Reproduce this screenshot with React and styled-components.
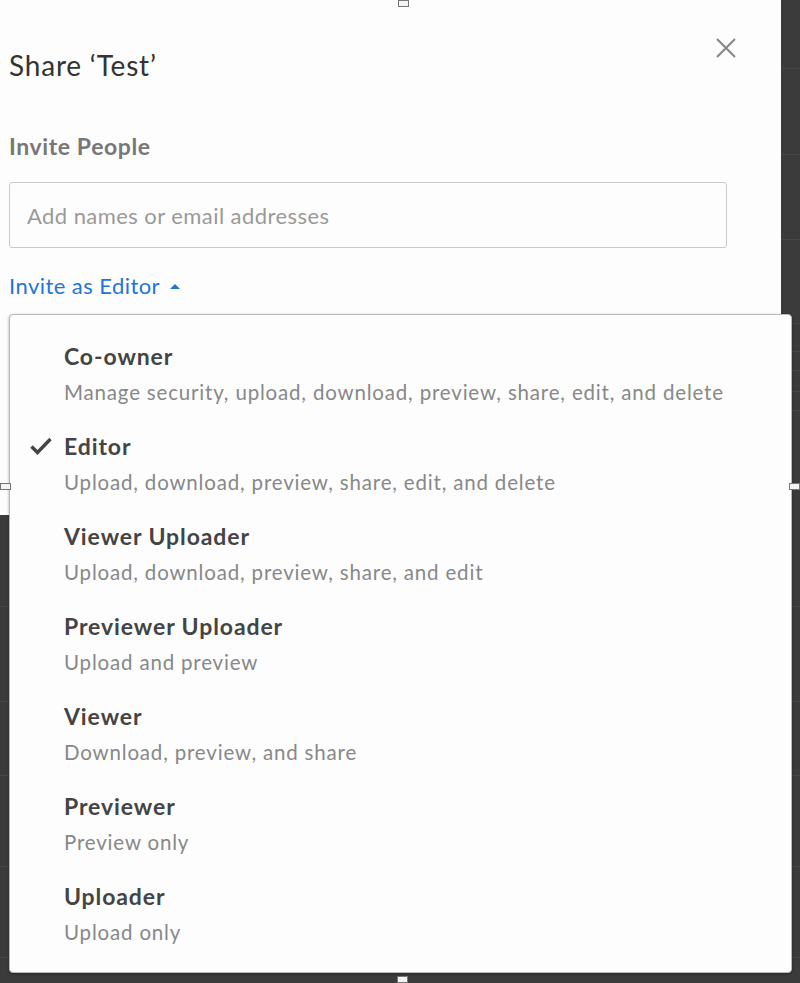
import React, { useState } from 'react';
import styled, { createGlobalStyle } from 'styled-components';

const roles = [
  { name: 'Co-owner', desc: 'Manage security, upload, download, preview, share, edit, and delete' },
  { name: 'Editor', desc: 'Upload, download, preview, share, edit, and delete' },
  { name: 'Viewer Uploader', desc: 'Upload, download, preview, share, and edit' },
  { name: 'Previewer Uploader', desc: 'Upload and preview' },
  { name: 'Viewer', desc: 'Download, preview, and share' },
  { name: 'Previewer', desc: 'Preview only' },
  { name: 'Uploader', desc: 'Upload only' },
];

// faint table rows of the page behind the dialog
const backRows = [68, 85, 84, 83, 27, 18, 20, 18, 195, 94, 73, 90, 90];

function CloseGlyph() {
  return (
    <svg width="22" height="22" viewBox="0 0 22 22">
      <path d="M2 2 L20 20 M20 2 L2 20" stroke="#8a8a8a" strokeWidth="2.2" fill="none" />
    </svg>
  );
}

function CheckGlyph() {
  return (
    <svg width="24" height="22" viewBox="0 0 24 22">
      <path d="M2.5 11.5 L8.5 17.5 L21.5 4" stroke="#454545" strokeWidth="3.4" fill="none" />
    </svg>
  );
}

function App() {
  const [role, setRole] = useState('Editor');
  const [open, setOpen] = useState(true);

  return (
    <Page>
      <GlobalStyle />
      <Backdrop>
        {backRows.map((h, i) => (
          <BackRow key={i} style={{ height: h }} />
        ))}
      </Backdrop>

      <Modal>
        <Header>
          <Title>Share ‘Test’</Title>
          <CloseButton aria-label="Close">
            <CloseGlyph />
          </CloseButton>
        </Header>

        <SectionLabel>Invite People</SectionLabel>
        <Input placeholder="Add names or email addresses" />

        <InviteToggle onClick={() => setOpen(!open)}>
          Invite as {role}
          <Caret up={open} />
        </InviteToggle>
      </Modal>

      {open && (
        <Menu>
          {roles.map(r => (
            <Option key={r.name} onClick={() => setRole(r.name)}>
              <CheckSlot>{role === r.name && <CheckGlyph />}</CheckSlot>
              <div>
                <OptionName>{r.name}</OptionName>
                <OptionDesc>{r.desc}</OptionDesc>
              </div>
            </Option>
          ))}
        </Menu>
      )}

      <Handle style={{ top: 0, left: 398 }} />
      <Handle style={{ bottom: 0, left: 397 }} />
      <Handle style={{ top: 483, left: 0 }} />
      <Handle style={{ top: 483, right: 0 }} />
    </Page>
  );
}

export default App;

const GlobalStyle = createGlobalStyle`
  body {
    margin: 0;
    background: #3b3b3b;
    font-family: Lato, "Open Sans", sans-serif;
  }
`

const Page = styled.div`
  position: relative;
  width: 800px;
  height: 983px;
  overflow: hidden;
  background: #3b3b3b;
`

const Backdrop = styled.div`
  position: absolute;
  inset: 0;
  display: flex;
  flex-direction: column;
`

const BackRow = styled.div`
  flex-shrink: 0;
  border-bottom: 1px solid #464646;
`

const Modal = styled.div`
  position: relative;
  width: 781px;
  height: 515px;
  box-sizing: border-box;
  background: #fdfdfd;
  padding: 0 54px 0 9px;
`

const Header = styled.div`
  display: flex;
  justify-content: space-between;
  align-items: flex-start;
  padding-top: 48px;
`

const Title = styled.h1`
  margin: 0;
  font-size: 28px;
  line-height: 34px;
  font-weight: 400;
  letter-spacing: 0.8px;
  color: #333;
`

const CloseButton = styled.button`
  border: 0;
  background: none;
  padding: 0;
  margin: -11px -10px 0 0;
  display: flex;
  cursor: pointer;
`

const SectionLabel = styled.div`
  margin-top: 50px;
  font-size: 23px;
  line-height: 28px;
  font-weight: 700;
  letter-spacing: 0.6px;
  color: #777;
`

const Input = styled.input`
  display: block;
  box-sizing: border-box;
  margin-top: 22px;
  width: 718px;
  height: 66px;
  border: 1px solid #c9c9c9;
  border-radius: 3px;
  padding: 0 17px;
  background: #fdfdfd;
  font-family: Lato, sans-serif;
  font-size: 22px;
  letter-spacing: 0.43px;
  color: #333;
  outline: none;
  &::placeholder {
    color: #999;
  }
`

const InviteToggle = styled.button`
  display: flex;
  align-items: center;
  gap: 10px;
  margin-top: 24px;
  border: 0;
  padding: 0;
  background: none;
  font-family: Lato, sans-serif;
  font-size: 22px;
  line-height: 28px;
  letter-spacing: 0.44px;
  color: #1f74d8;
  cursor: pointer;
`

const Caret = styled.span`
  width: 0;
  height: 0;
  border-left: 5px solid transparent;
  border-right: 5px solid transparent;
  ${props => props.up ? 'border-bottom: 5px solid #1f74d8;' : 'border-top: 5px solid #1f74d8;'}
`

const Menu = styled.div`
  position: absolute;
  top: 314px;
  left: 9px;
  width: 783px;
  height: 659px;
  box-sizing: border-box;
  padding: 23px 0 0;
  background: #fdfdfd;
  border: 1px solid #b9b9b9;
  border-radius: 4px;
  box-shadow: 0 1px 3px rgba(0, 0, 0, 0.35);
  display: flex;
  flex-direction: column;
  gap: 18px;
`

const Option = styled.div`
  display: flex;
  cursor: pointer;
`

const CheckSlot = styled.div`
  width: 54px;
  flex-shrink: 0;
  display: flex;
  justify-content: flex-end;
  padding: 7px 11px 0 0;
  box-sizing: border-box;
`

const OptionName = styled.div`
  font-size: 23px;
  line-height: 36px;
  font-weight: 700;
  letter-spacing: 0.9px;
  color: #444;
`

const OptionDesc = styled.div`
  font-size: 20.5px;
  line-height: 36px;
  letter-spacing: 0.82px;
  color: #888;
`

const Handle = styled.span`
  position: absolute;
  width: 9px;
  height: 5px;
  background: #f4f4f4;
  border: 1px solid #777;
`
